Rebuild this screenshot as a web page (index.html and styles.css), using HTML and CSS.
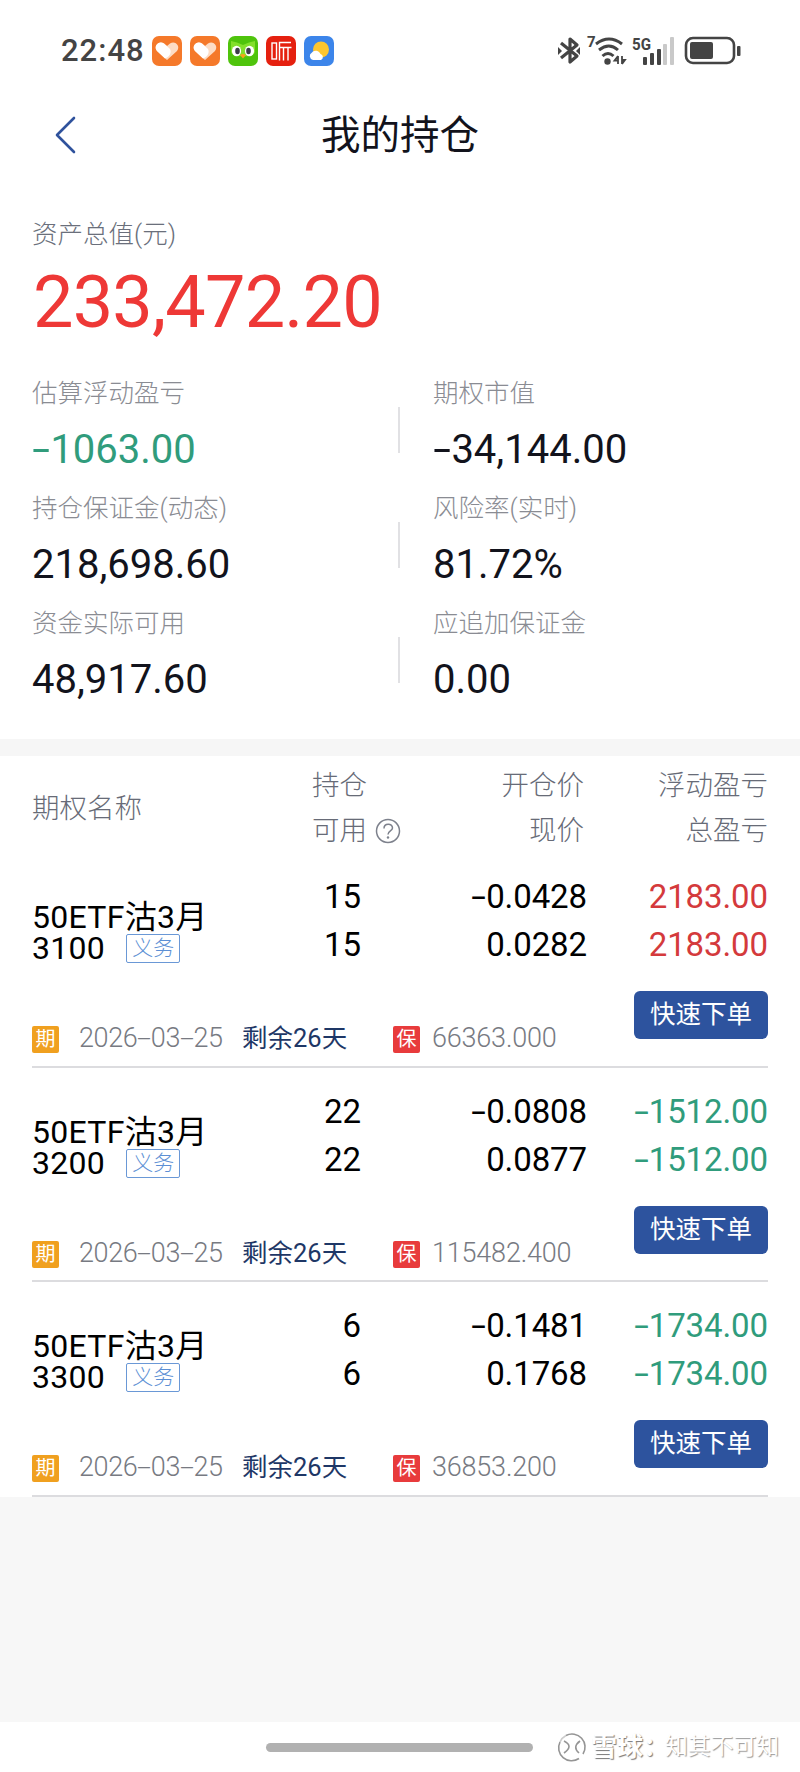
FILE: index.html
```html
<!DOCTYPE html>
<html lang="zh-CN">
<head>
  <meta charset="utf-8">
  <meta name="viewport" content="width=device-width">
  <title>我的持仓</title>
  <link rel="stylesheet" href="styles.css">
</head>
<body>
<div class="status">
  <span class="time">22:48</span>
  <div class="apps">
    <svg class="app" viewBox="0 0 30 30">
      <rect width="30" height="30" rx="7" fill="#f5792a"/>
      <path d="M15 24 L5 15 C1 10 7 4 12 7.500 L15 10 L18 7.500 C23 4 29 10 25 15 Z" fill="#fddcc4"/>
      <path d="M13 22.500 L5 15 C1 10 7 4 12 7.500 L18 13 C20 17 17 21 13 22.500 Z" fill="#fff"/>
    </svg>
    <svg class="app" viewBox="0 0 30 30">
      <rect width="30" height="30" rx="7" fill="#f5792a"/>
      <path d="M15 24 L5 15 C1 10 7 4 12 7.500 L15 10 L18 7.500 C23 4 29 10 25 15 Z" fill="#fddcc4"/>
      <path d="M13 22.500 L5 15 C1 10 7 4 12 7.500 L18 13 C20 17 17 21 13 22.500 Z" fill="#fff"/>
    </svg>
    <svg class="app" viewBox="0 0 30 30">
      <rect width="30" height="30" rx="7" fill="#4fc40c"/>
      <path d="M3 5 Q9 6 15 9 Q21 6 27 5 L27 16 Q26 21 15 20 Q4 21 3 16 Z" fill="#83df2c"/>
      <ellipse cx="8.500" cy="15" rx="4.600" ry="5.200" fill="#fff"/>
      <ellipse cx="21.500" cy="15" rx="4.600" ry="5.200" fill="#fff"/>
      <ellipse cx="9.500" cy="15" rx="2.300" ry="3.300" fill="#3c3c4a"/>
      <ellipse cx="20.500" cy="15" rx="2.300" ry="3.300" fill="#3c3c4a"/>
      <path d="M12 19 Q15 17 18 19 L15 22.500 Z" fill="#f7a41b"/>
    </svg>
    <svg class="app" viewBox="0 0 30 30">
      <rect width="30" height="30" rx="7" fill="#e5200f"/>
      <g fill="none" stroke="#fff" stroke-width="1.400">
        <rect x="6" y="7" width="4.500" height="16"/>
        <path d="M25 6.500H13.500V24.500M13.500 11.500H25.500M17.500 11.500V24.500M22 11.500V24.500"/>
      </g>
    </svg>
    <svg class="app" viewBox="0 0 30 30">
      <rect width="30" height="30" rx="7" fill="#3c85ea"/>
      <circle cx="17" cy="13.500" r="8" fill="#fdc62f"/>
      <path d="M9 24 A4 4 0 0 1 8 16.500 A5 5 0 0 1 16.500 18 A3.200 3.200 0 0 1 17 24 Z" fill="#fff"/>
    </svg>
  </div>
  <svg class="signals" viewBox="0 0 190 40" width="190" height="40">
    <path d="M3 12 L19 25 L12 31 V8 L19 14 L3 27" fill="none" stroke="#444" stroke-width="3.200" stroke-linejoin="round"/>
    <path d="M0 16l4 4-4 4zM22 16l-4 4 4 4z" fill="#444"/>
    <text class="sig-text" x="29" y="16" font-size="15">7</text>
    <g fill="none" stroke="#444" stroke-width="3">
      <path d="M38 13 Q51 3 64 13"/>
      <path d="M41 19 Q51 11 60 19"/>
      <path d="M44.500 25 Q50 20 55.500 25"/>
    </g>
    <circle cx="49.500" cy="30.500" r="3.200" fill="#444"/>
    <path d="M60 25v8M60 25l-3.500 4.500h3M64 33v-8M64 33l3-4h-3" stroke="#444" stroke-width="1.800" fill="none"/>
    <text class="sig-text" x="74" y="18.500" font-size="16.500" textLength="19" lengthAdjust="spacingAndGlyphs">5G</text>
    <g fill="#444">
      <rect x="85" y="26" width="4" height="8" rx="1"/>
      <rect x="92" y="22" width="4" height="12" rx="1"/>
      <rect x="99" y="18" width="4" height="16" rx="1"/>
    </g>
    <rect x="105" y="13" width="4" height="21" rx="1" fill="#c9c9c9"/>
    <rect x="112" y="6" width="4" height="28" rx="1" fill="#c9c9c9"/>
    <rect x="128" y="7" width="48" height="25" rx="7" fill="none" stroke="#444" stroke-width="2.600"/>
    <rect x="132" y="11" width="23" height="17" rx="2" fill="#444"/>
    <rect x="179" y="15" width="3.500" height="10" rx="1" fill="#444"/>
  </svg>
</div>

<div class="nav">
  <svg class="back" viewBox="0 0 22 40" width="22" height="40">
    <path d="M20 3 L3 20 L20 37" fill="none" stroke="#2f529c" stroke-width="2.600" stroke-linecap="round" stroke-linejoin="round"/>
  </svg>
  <h1>我的持仓</h1>
</div>

<div class="total">
  <div class="total-label">资产总值(元)</div>
  <div class="total-num">233,472.20</div>
</div>

<div class="grid">
  <div class="cell">
    <div class="label">估算浮动盈亏</div>
    <div class="value green"><i>-</i>1063.00</div>
  </div>
  <div class="cell">
    <div class="label">期权市值</div>
    <div class="value"><i>-</i>34,144.00</div>
  </div>
  <div class="cell">
    <div class="label">持仓保证金(动态)</div>
    <div class="value">218,698.60</div>
  </div>
  <div class="cell">
    <div class="label">风险率(实时)</div>
    <div class="value">81.72%</div>
  </div>
  <div class="cell">
    <div class="label">资金实际可用</div>
    <div class="value">48,917.60</div>
  </div>
  <div class="cell">
    <div class="label">应追加保证金</div>
    <div class="value">0.00</div>
  </div>
</div>

<div class="list">
  <div class="thead">
    <div class="th-name">期权名称</div>
    <div class="th-hold">
      <div>持仓</div>
      <div class="avail">可用
        <svg class="help" viewBox="0 0 26 26" width="26" height="26">
          <circle cx="13" cy="13" r="11.500" fill="none" stroke="#7d818c" stroke-width="1.500"/>
          <path d="M9 10.500 C9 5 17.500 5 17.500 10 C17.500 13 13 13 13 16.500" fill="none" stroke="#7d818c" stroke-width="1.500"/>
          <circle cx="13" cy="19.500" r="1.200" fill="#7d818c"/>
        </svg>
      </div>
    </div>
    <div class="th-price"><div>开仓价</div><div>现价</div></div>
    <div class="th-profit"><div>浮动盈亏</div><div>总盈亏</div></div>
  </div>

  <div class="item">
    <div class="row">
      <div class="name">50ETF沽3月<br>3100<span class="tag">义务</span></div>
      <div class="hold">15<br>15</div>
      <div class="price"><i>-</i>0.0428<br>0.0282</div>
      <div class="profit red">2183.00<br>2183.00</div>
    </div>
    <div class="foot">
      <span class="badge">期</span>
      <span class="date">2026<i>-</i>03<i>-</i>25</span>
      <span class="left">剩余26天</span>
      <span class="badge bao">保</span>
      <span class="margin">66363.000</span>
      <span class="btn">快速下单</span>
    </div>
  </div>

  <div class="item">
    <div class="row">
      <div class="name">50ETF沽3月<br>3200<span class="tag">义务</span></div>
      <div class="hold">22<br>22</div>
      <div class="price"><i>-</i>0.0808<br>0.0877</div>
      <div class="profit green"><i>-</i>1512.00<br><i>-</i>1512.00</div>
    </div>
    <div class="foot">
      <span class="badge">期</span>
      <span class="date">2026<i>-</i>03<i>-</i>25</span>
      <span class="left">剩余26天</span>
      <span class="badge bao">保</span>
      <span class="margin">115482.400</span>
      <span class="btn">快速下单</span>
    </div>
  </div>

  <div class="item">
    <div class="row">
      <div class="name">50ETF沽3月<br>3300<span class="tag">义务</span></div>
      <div class="hold">6<br>6</div>
      <div class="price"><i>-</i>0.1481<br>0.1768</div>
      <div class="profit green"><i>-</i>1734.00<br><i>-</i>1734.00</div>
    </div>
    <div class="foot">
      <span class="badge">期</span>
      <span class="date">2026<i>-</i>03<i>-</i>25</span>
      <span class="left">剩余26天</span>
      <span class="badge bao">保</span>
      <span class="margin">36853.200</span>
      <span class="btn">快速下单</span>
    </div>
  </div>
</div>

<div class="blank"></div>

<div class="bottom">
  <div class="home-bar"></div>
  <div class="mark">
    <svg viewBox="0 0 30 30" width="30" height="30">
      <g fill="none" stroke="#959595" stroke-width="1.600">
        <path d="M9 3.500 A13 13 0 0 1 26 22M22 26.500 A13 13 0 0 1 3 10"/>
        <path d="M3 10 A13 13 0 0 1 9 3.500" stroke="#ccc"/>
        <path d="M7 9 Q17 14 7 21M23 9 Q15 15 22 21"/>
      </g>
    </svg>
    <b>雪球：</b><span>知其不可知</span>
  </div>
</div>
</body>
</html>
```
FILE: styles.css
```css
*{
  margin: 0;
  padding: 0;
  box-sizing: border-box;
}
body{
  width: 800px;
  height: 1772px;
  background: #fff;
  color: #12131c;
  font-family: Roboto, "Noto Sans CJK SC", sans-serif;
  overflow: hidden;
}
/* 负号比字体自带的连字符宽 */
i{
  display: inline-block;
  font-style: normal;
  width: 0.46em;
  text-align: center;
  transform: scaleX(1.6);
}
.red{
  color: #d43a3c;
}
.green{
  color: #309c7c;
}

/* 状态栏 */
.status{
  height: 90px;
  padding: 11px 52px 0 61px;
  display: flex;
  align-items: center;
}
.time{
  width: 91px;
  font-size: 31px;
  font-weight: 500;
  letter-spacing: 1px;
  color: #444;
}
.apps{
  display: flex;
  gap: 8px;
}
.app{
  width: 30px;
  height: 30px;
}
.signals{
  margin-left: auto;
}
.sig-text{
  font-family: Roboto, sans-serif;
  font-weight: 700;
  fill: #444;
}

.nav{
  height: 90px;
  display: grid;
  grid-template-columns: 1fr 158px 1fr;
  align-items: center;
}
.back{
  margin-left: 54px;
}
.nav h1{
  padding-top: 2px;
  font-size: 39.5px;
  font-weight: 400;
  line-height: 50px;
  white-space: nowrap;
}

.total{
  height: 192px;
  padding: 35px 32px 0;
}
.total-label{
  font-size: 25.5px;
  line-height: 38px;
  font-weight: 300;
  color: #6a6f7b;
}
.total-num{
  margin: 14px 0 0 1px;
  font-size: 72px;
  line-height: 72px;
  letter-spacing: -0.8px;
  color: #ee3836;
}

.grid{
  height: 367px;
  display: grid;
  grid-template-columns: 400px 1fr;
  grid-auto-rows: 115px;
}
.cell{
  padding: 3px 0 0 32px;
  background: linear-gradient(#e1e1e4, #e1e1e4) no-repeat 398px 35px / 2px 46px;
}
.cell:nth-child(even){
  padding-left: 33px;
  background: none;
}
.label{
  font-size: 25.5px;
  line-height: 36px;
  font-weight: 300;
  color: #8a8c93;
}
.value{
  margin-top: 14px;
  font-size: 40px;
  line-height: 50px;
}

.list{
  border-top: 17px solid #f6f6f6;
}
.thead{
  height: 97px;
  margin: 0 32px;
  padding-top: 7px;
  display: grid;
  grid-template-columns: 280px 100px 172px 184px;
  font-size: 27.5px;
  line-height: 45px;
  font-weight: 300;
  color: #676b77;
}
.th-name{
  padding-top: 23px;
}
.avail{
  display: flex;
  align-items: center;
  gap: 8px;
}
.help{
  margin-top: 1px;
}
.th-price,
.th-profit{
  text-align: right;
}

.item{
  height: 214.500px;
  margin: 0 32px;
  border-bottom: 2px solid #dcdcdf;
}
.row{
  height: 138px;
  padding-top: 20px;
  display: grid;
  grid-template-columns: 229px 100px 226px 181px;
  font-size: 33px;
  line-height: 48px;
  letter-spacing: -0.1px;
  color: #000;
}
.name{
  padding-top: 29px;
  font-size: 32px;
  line-height: 31px;
  letter-spacing: 0.3px;
}
.tag{
  display: inline-block;
  height: 29px;
  margin-left: 21px;
  padding: 0 5px;
  border: 1.500px solid #6a98d6;
  border-radius: 2px;
  font-size: 21px;
  line-height: 27px;
  letter-spacing: 0;
  font-weight: 300;
  color: #5c8fd4;
  vertical-align: top;
  margin-top: 1px;
}
.hold,
.price,
.profit{
  text-align: right;
}
.foot{
  height: 50px;
  display: flex;
  color: #777a82;
  font-size: 27px;
  line-height: 94px;
  font-weight: 300;
}
.badge{
  width: 27px;
  height: 27px;
  margin-top: 35px;
  border-radius: 2px;
  background: #f0a01f;
  color: #fff;
  font-size: 20px;
  line-height: 26px;
  font-weight: 400;
  text-align: center;
}
.bao{
  background: #e83b3c;
}
.date{
  width: 163px;
  margin-left: 20px;
  letter-spacing: -0.4px;
}
.date i{
  width: 0.5em;
  transform: scaleX(1.9);
}
.left{
  width: 151px;
  font-size: 25.500px;
  font-weight: 400;
  color: #1e3766;
}
.margin{
  margin-left: 12px;
  letter-spacing: -0.2px;
}
.btn{
  width: 134px;
  height: 48px;
  margin-left: auto;
  border-radius: 6px;
  background: #2d539e;
  color: #fff;
  font-size: 25.500px;
  line-height: 47px;
  font-weight: 400;
  text-align: center;
}

.blank{
  height: 225px;
  background: #f7f7f7;
}
.bottom{
  height: 50px;
  display: flex;
  align-items: center;
}
.home-bar{
  flex: none;
  width: 267px;
  height: 9px;
  margin: 2px 0 0 266px;
  border-radius: 5px;
  background: #b1b1b1;
}
/* 水印: 白字加灰色投影 */
.mark{
  margin-left: 24px;
  display: flex;
  align-items: center;
  font-size: 22.800px;
  line-height: 30px;
  white-space: nowrap;
  color: #fff;
  text-shadow: 1px 1px 1px #999;
}
.mark b{
  width: 74px;
  margin-left: 4px;
  font-size: 26px;
  text-shadow: 1px 1px 1px #777;
}
```
